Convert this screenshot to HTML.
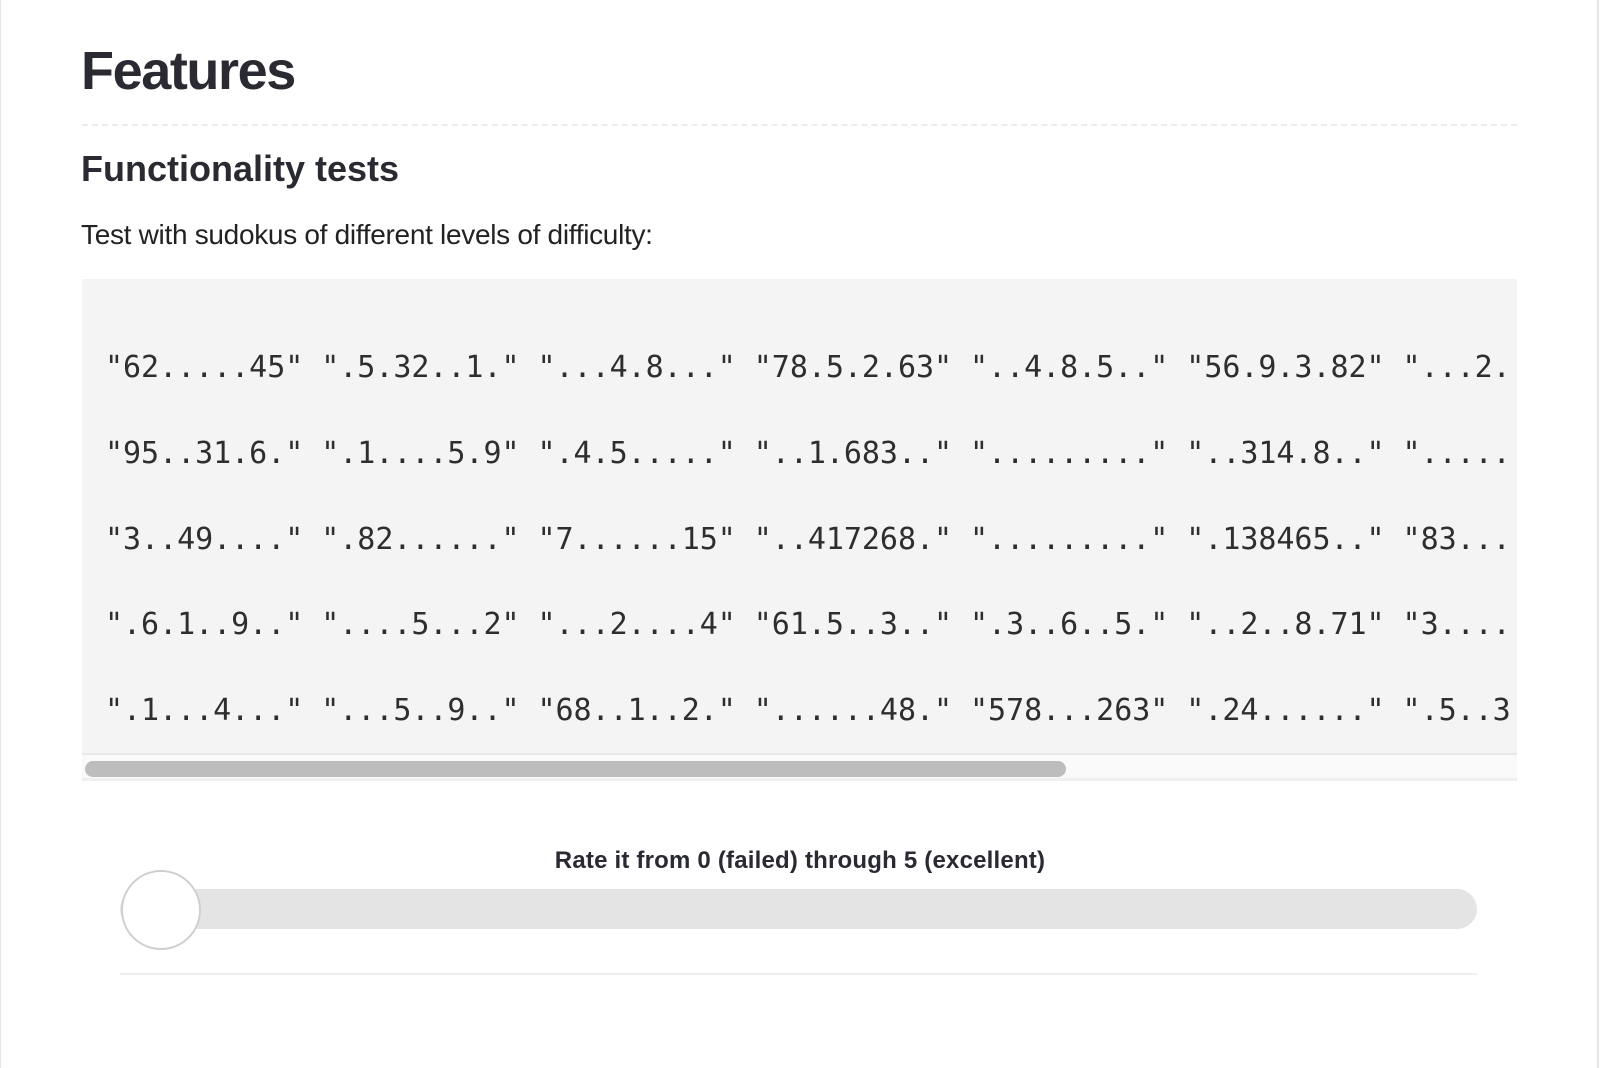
<!DOCTYPE html>
<html><head><meta charset="utf-8"><style>
html,body{margin:0;padding:0;background:#fff;}
body{width:1600px;height:1056px;position:relative;overflow:hidden;font-family:"Liberation Sans",sans-serif;color:#2a2a33;}
.frame{position:absolute;left:0;top:-2px;width:1596px;height:1070px;border-left:1px solid #e6e6e6;border-right:2px solid #e6e6e6;}
h1{position:absolute;left:81px;top:39px;margin:0;font-size:54px;font-weight:bold;letter-spacing:-1.4px;line-height:64px;}
.dash{position:absolute;left:82px;top:124px;width:1435px;border-top:2px dashed #ececec;}
h2{position:absolute;left:81px;top:147px;margin:0;font-size:36px;font-weight:bold;letter-spacing:0px;line-height:44px;}
p{position:absolute;left:81px;top:217px;margin:0;font-size:28px;letter-spacing:-0.3px;line-height:36px;color:#222;}
.code{position:absolute;left:82px;top:279px;width:1435px;height:474px;background:#f4f4f4;overflow:hidden;}
.code pre{margin:0;position:absolute;left:23px;top:46px;font-family:"DejaVu Sans Mono",monospace;font-size:30px;letter-spacing:-0.04px;line-height:85.8px;color:#2e2e2e;white-space:pre;}
.track{position:absolute;left:82px;top:753px;width:1435px;height:28px;background:#fafafa;border-top:2px solid #e8e8e8;border-bottom:3px solid #efefef;box-sizing:border-box;}
.thumb{position:absolute;left:85px;top:761px;width:981px;height:16px;border-radius:8px;background:#bdbdbd;}
.label{position:absolute;left:0;width:1600px;text-align:center;top:847px;font-size:24px;font-weight:bold;letter-spacing:0.2px;color:#2a2a33;}
.slider{position:absolute;left:120px;top:889px;width:1357px;height:40px;border-radius:20px;background:#e4e4e4;}
.knob{position:absolute;left:121px;top:870px;width:76px;height:76px;border-radius:50%;background:#fff;border:2px solid #cfcfcf;}
.hr{position:absolute;left:120px;top:973px;width:1357px;border-top:2px solid #eee;}
</style></head><body>
<div class="frame"></div>
<h1>Features</h1>
<div class="dash"></div>
<h2>Functionality tests</h2>
<p>Test with sudokus of different levels of difficulty:</p>
<div class="code"><pre>"62.....45" ".5.32..1." "...4.8..." "78.5.2.63" "..4.8.5.." "56.9.3.82" "...2.
"95..31.6." ".1....5.9" ".4.5....." "..1.683.." "........." "..314.8.." ".....
"3..49...." ".82......" "7......15" "..417268." "........." ".138465.." "83...
".6.1..9.." "....5...2" "...2....4" "61.5..3.." ".3..6..5." "..2..8.71" "3....
".1...4..." "...5..9.." "68..1..2." "......48." "578...263" ".24......" ".5..3</pre></div>
<div class="track"></div>
<div class="thumb"></div>
<div class="label">Rate it from 0 (failed) through 5 (excellent)</div>
<div class="slider"></div>
<div class="knob"></div>
<div class="hr"></div>
</body></html>
